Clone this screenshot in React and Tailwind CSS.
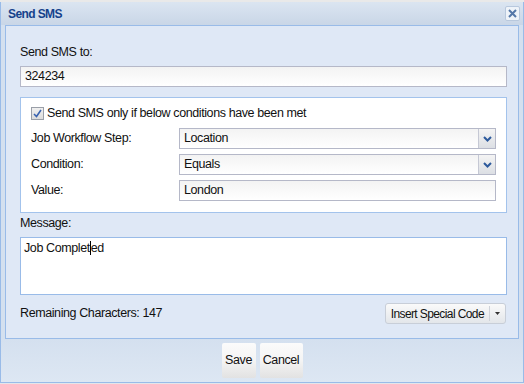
import React from 'react';

function Chevron() {
     return (
          <svg width="9" height="6" viewBox="0 0 9 6">
               <path d="M1 1 L4.5 4.5 L8 1" fill="none" stroke="#2d5a9c" strokeWidth="2" />
          </svg>
     );
}

function SelectBox({ value }) {
     return (
          <div className="flex-1 h-[21px] flex border border-[#b5b8c8] bg-gradient-to-b from-[#f3f3f3] to-white">
               <div className="flex-1 pl-[4px] leading-[19px]">{value}</div>
               <div className="w-[17px] flex items-center justify-center border-l border-[#c5c8d4] bg-gradient-to-b from-[#f4f4f4] to-[#dcdfe4]">
                    <Chevron />
               </div>
          </div>
     );
}

function TextBox({ value, className = '' }) {
     return (
          <div className={`h-[21px] pl-[4px] leading-[19px] border border-[#b5b8c8] bg-gradient-to-b from-[#f3f3f3] to-white ${className}`}>
               {value}
          </div>
     );
}

export default function App() {
     return (
          <div className="w-[524px] h-[384px] bg-[#e4e6ea] overflow-hidden text-[12.5px] tracking-[-0.4px] text-[#111] whitespace-nowrap" style={{ fontFamily: '"Liberation Sans", Arial, sans-serif' }}>
               <div className="h-[2px] bg-[#e9e9e9]"></div>
               <div className="h-[381px] flex flex-col bg-[#d4e0ef] border-x border-b border-[#99bbe8]">
                    {/* header */}
                    <div className="h-[23px] flex items-center justify-between pl-[7px] pr-[3px] bg-gradient-to-b from-[#dbe5f1] to-[#c9d6e7]">
                         <span className="font-bold text-[#15428b] text-[12px] tracking-[-0.6px]">Send SMS</span>
                         <div className="w-[15px] h-[15px] rounded-[2px] border border-[#b8c8dd] bg-[#eef3f9] flex items-center justify-center">
                              <svg width="9" height="9" viewBox="0 0 9 9">
                                   <path d="M1 1 L8 8 M8 1 L1 8" stroke="#5477a8" strokeWidth="2" />
                              </svg>
                         </div>
                    </div>

                    {/* body */}
                    <div className="mx-[4px] h-[314px] border border-[#99bbe8] bg-[#dfe8f6] pl-[14px] pr-[11px] pt-[19px]">
                         <div className="h-[14px] leading-[14px]">Send SMS to:</div>
                         <TextBox value="324234" className="mt-[7px]" />

                         <div className="mt-[10px] h-[116px] border border-[#a3c3ec] bg-white px-[10px] pt-[8px]">
                              <div className="h-[14px] flex items-center gap-[3px]">
                                   <div className="w-[13px] h-[13px] border border-[#9a9fa8] bg-gradient-to-b from-[#f0f0f0] to-[#dcdcdc] flex items-center justify-center">
                                        <svg width="9" height="9" viewBox="0 0 9 9">
                                             <path d="M1 5 L3.5 7.5 L8 1" fill="none" stroke="#3a63b0" strokeWidth="1.6" />
                                        </svg>
                                   </div>
                                   <span>Send SMS only if below conditions have been met</span>
                              </div>
                              <div className="mt-[8px] flex items-center">
                                   <div className="w-[148px]">Job Workflow Step:</div>
                                   <SelectBox value="Location" />
                              </div>
                              <div className="mt-[5px] flex items-center">
                                   <div className="w-[148px]">Condition:</div>
                                   <SelectBox value="Equals" />
                              </div>
                              <div className="mt-[5px] flex items-center">
                                   <div className="w-[148px]">Value:</div>
                                   <TextBox value="London" className="flex-1" />
                              </div>
                         </div>

                         <div className="mt-[3px] h-[14px] leading-[14px]">Message:</div>
                         <div className="mt-[7px] h-[58px] border border-[#99bbe8] bg-white pl-[3px] pt-[3px] leading-[14px]">
                              Job Complet<span className="inline-block w-px h-[14px] bg-black align-top"></span>ed
                         </div>

                         <div className="mt-[8px] flex items-center justify-between pr-[1px]">
                              <span>Remaining Characters: 147</span>
                              <div className="h-[21px] flex items-center rounded-[3px] border border-[#c8ced8] bg-gradient-to-b from-[#fafafa] to-[#e3e6ea] pl-[5px] pr-[5px]">
                                   <span className="text-[12px] tracking-[-0.6px]">Insert Special Code</span>
                                   <div className="ml-[5px] shrink-0 w-px h-[15px] bg-[#cfd3da]"></div>
                                   <svg className="ml-[5px] shrink-0" width="5" height="3" viewBox="0 0 5 3">
                                        <path d="M0 0 L5 0 L2.5 3 Z" fill="#333" />
                                   </svg>
                              </div>
                         </div>
                    </div>

                    {/* footer */}
                    <div className="flex-1 flex justify-center items-start pt-[4px] gap-[4px] bg-gradient-to-b from-[#d4e0ef] to-[#dde7f3]">
                         <div className="h-[35px] w-[34px] rounded-[2px] bg-gradient-to-b from-[#fbfbfb] via-[#f4f4f4] to-[#e2e2e2] flex items-center justify-center">Save</div>
                         <div className="h-[35px] w-[43px] rounded-[2px] bg-gradient-to-b from-[#fbfbfb] via-[#f4f4f4] to-[#e2e2e2] flex items-center justify-center">Cancel</div>
                    </div>
               </div>
          </div>
     );
}
